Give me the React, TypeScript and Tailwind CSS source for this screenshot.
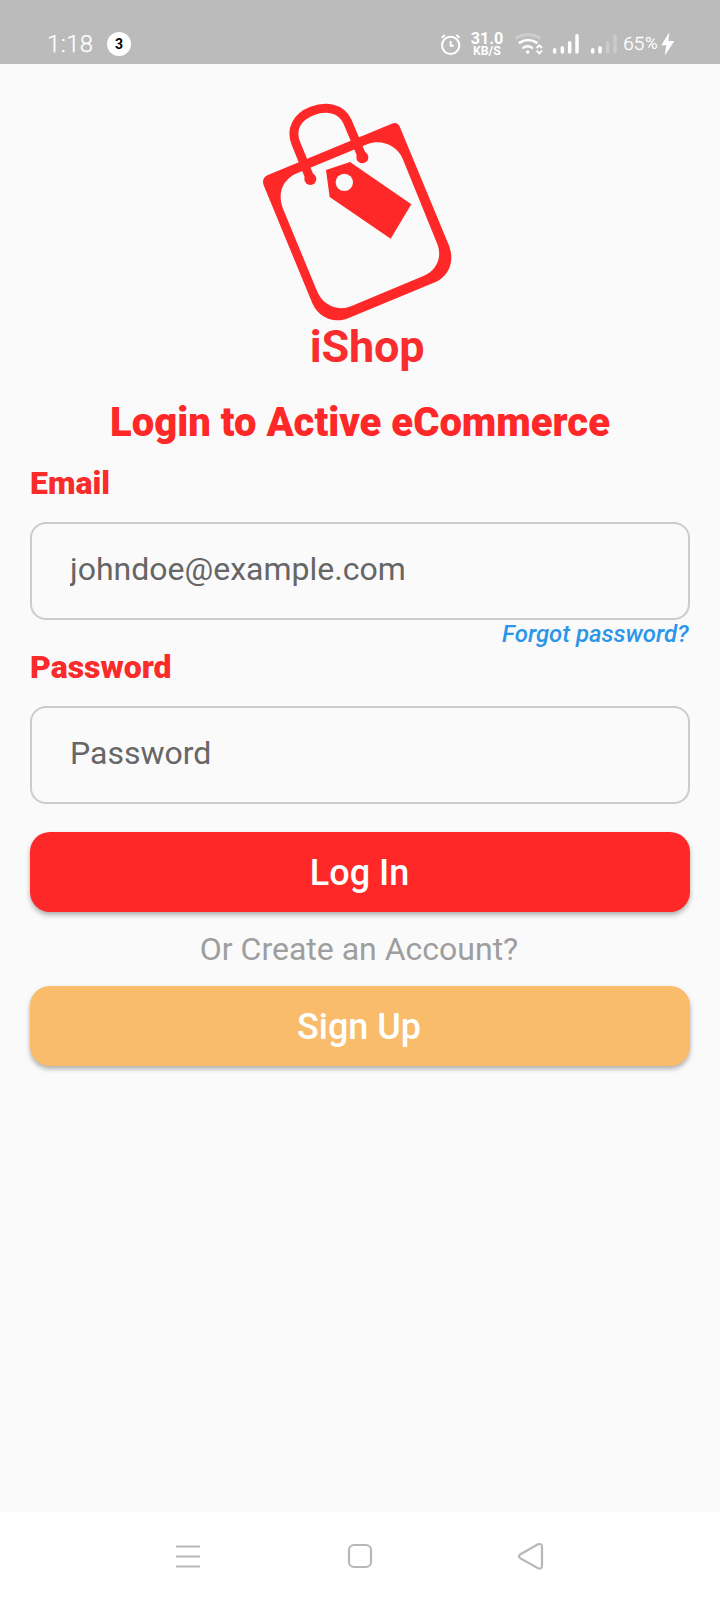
import React from "react";

function StatusBar() {
  return (
    <header className="flex h-16 items-end bg-[#bbbbbb] pl-[47px] text-white">
      <span className="h-9 w-[48px] whitespace-nowrap text-[24px] leading-[33px] font-light tracking-[0.4px] [-webkit-text-stroke:0.25px_white]">1:18</span>
      <span className="mb-2 ml-3 flex h-6 w-6 items-center justify-center rounded-full bg-white text-[14px] font-bold text-black">
        3
      </span>
      <div className="ml-auto flex h-16 w-[300px]">
        <svg width="300" height="64" viewBox="0 0 900 192" fill="none" stroke="white" strokeWidth="6" strokeLinecap="round">
          <circle cx="92" cy="136" r="26" />
          <path d="M92 123v14h9M65 113l10-8M119 113l-10-8" strokeLinecap="butt" />
          <text x="152" y="132" fill="white" stroke="none" fontSize="48" fontWeight="700" textLength="98" lengthAdjust="spacingAndGlyphs">31.0</text>
          <text x="159" y="166" fill="white" stroke="none" fontSize="37" fontWeight="700" textLength="83" lengthAdjust="spacingAndGlyphs">KB/S</text>
          <path d="M290 113Q324 94 358 113" stroke="#cdcdcd" strokeWidth="9" />
          <path d="M299 128Q324 112 350 128M310 143Q323 134 336 143" strokeWidth="7.5" />
          <circle cx="323" cy="156" r="5.5" fill="white" stroke="none" />
          <path d="M350 144l8-8 8 8M350 152l8 8 8-8" strokeWidth="6" strokeLinecap="butt" />
          <g strokeWidth="10.5">
            <path d="M404 149v7M427 143v13M449 128v28M471 107v49M518 149v7M540 143v13" />
            <path d="M563 128v28M585 107v49" stroke="#cbcbcb" />
          </g>
          <text x="610" y="151" fill="white" stroke="white" strokeWidth="0.8" fontSize="56" fontWeight="300" textLength="63" lengthAdjust="spacingAndGlyphs">65</text>
          <text x="675" y="147" fill="white" stroke="none" fontSize="50" fontWeight="400" textLength="38" lengthAdjust="spacingAndGlyphs">%</text>
          <path d="M748 97l-24 39h15l-5 31 29-44h-18z" fill="white" stroke="none" />
        </svg>
      </div>
    </header>
  );
}

function Logo() {
  return (
    <div className="flex flex-col items-center">
      <svg className="mt-[26px]" width="240" height="232" viewBox="0 0 720 696">
        <path
          fill="#fe2828"
          fillRule="evenodd"
          d="M82 256L459 100Q472 96 478 107L626 464C645 510 629 558 585 577L328 683C283 702 239 685 218 642L71 286Q64 266 82 256ZM171 250C128 268 111 310 129 356L231 603C248 645 291 665 333 649L550 558C591 541 608 501 591 460L488 206C471 166 425 146 383 162Z"
        />
        <path
          d="M211 267L168 161C150 117 172 80 216 63C258 47 303 53 322 94L367 201"
          fill="none"
          stroke="#fe2828"
          strokeWidth="27"
        />
        <circle cx="211" cy="267" r="18" fill="#fe2828" />
        <circle cx="367" cy="202" r="18" fill="#fe2828" />
        <path d="M258 240L330 216L514 343L452 446L269 321Z" fill="#fe2828" />
        <circle cx="313" cy="277" r="26" fill="#fafafa" />
      </svg>
      <span className="mb-px ml-[14px] text-[45px] leading-[50px] font-bold tracking-[-0.2px] text-[#f92d2d]">iShop</span>
    </div>
  );
}

function Field({ label, placeholder, type }: { label: string; placeholder: string; type: string }) {
  return (
    <label className="flex flex-col gap-5">
      <span className="text-[32px] leading-[38px] font-black text-[#fa2b2b]">{label}</span>
      <input
        type={type}
        placeholder={placeholder}
        className="h-[98px] w-full rounded-2xl border-2 border-[#cccccc] bg-transparent px-[38px] pb-[5px] text-[32px] text-[#666666] outline-none placeholder:text-[#666666] placeholder:opacity-100"
      />
    </label>
  );
}

function NavBar() {
  return (
    <nav className="mt-auto flex h-[88px] items-center justify-center bg-white">
      <svg width="420" height="88" viewBox="0 0 420 88" fill="none" stroke="#b7b7b7" strokeWidth="2.2">
        <path d="M26 34.5h24M26 44.5h24M26 54.5h24" />
        <rect x="199" y="33" width="22" height="22" rx="5" />
        <path d="M388 32.300L370.500 42.200Q367.500 44.300 370.500 46.400L388 56.300Q392 57.500 392 53.500V35Q392 31 388 32.300Z" />
      </svg>
    </nav>
  );
}

export default function App() {
  return (
    <div className="flex h-[1600px] w-[720px] flex-col overflow-hidden bg-[#fafafa] font-[Roboto,sans-serif]">
      <StatusBar />
      <main className="flex flex-col px-[30px]">
        <Logo />
        <h1 className="mt-[27px] mb-[18px] text-center text-[40px] leading-[46px] font-black whitespace-nowrap text-[#fe2828]">
          Login to Active eCommerce
        </h1>
        <Field label="Email" placeholder="johndoe@example.com" type="text" />
        <a className="mr-[1.5px] self-end text-[24px] leading-[28px] font-medium text-[#2b95e9] italic">Forgot password?</a>
        <Field label="Password" placeholder="Password" type="password" />
        <button className="mt-7 h-20 rounded-[20px] bg-[#fe2828] pt-[2px] pr-px text-[36px] font-medium text-white shadow-[0_3px_5px_rgba(0,0,0,0.3)]">
          Log In
        </button>
        <p className="mt-[18px] mb-[18px] pr-[2px] text-center text-[32px] leading-[38px] text-[#9e9e9e]">Or Create an Account?</p>
        <button className="h-20 rounded-[20px] bg-[#f9bc6b] pt-[2px] pr-[2px] text-[36px] font-medium text-white shadow-[0_3px_5px_rgba(0,0,0,0.3)]">
          Sign Up
        </button>
      </main>
      <NavBar />
    </div>
  );
}
